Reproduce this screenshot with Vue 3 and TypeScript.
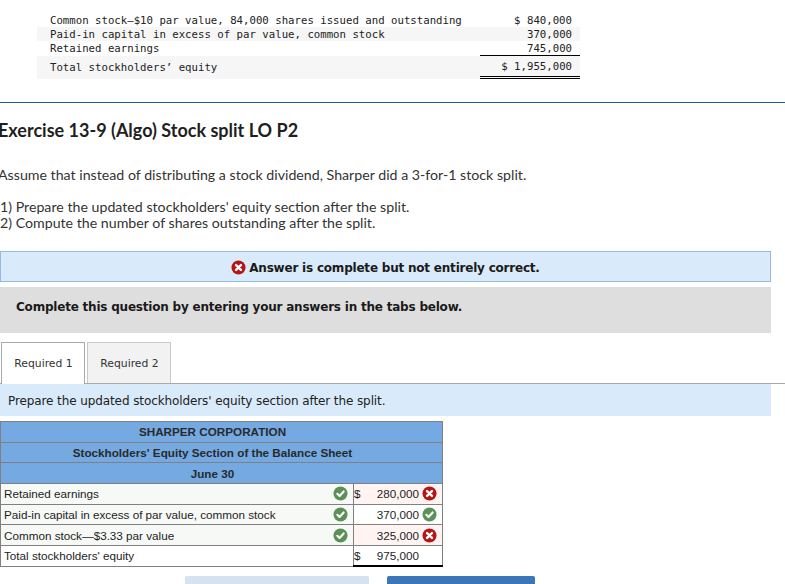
<script setup lang="ts">
interface TopRow { label: string; value: string; kind?: string }
const topRows: TopRow[] = [
  { label: 'Common stock—$10 par value, 84,000 shares issued and outstanding', value: '$ 840,000' },
  { label: 'Paid-in capital in excess of par value, common stock', value: '370,000', kind: 'alt' },
  { label: 'Retained earnings', value: '745,000', kind: 'under' },
  { label: 'Total stockholders’ equity', value: '$ 1,955,000', kind: 'total' },
]
interface Row { label: string; cur: string; value: string; valueOk: boolean; wrong: boolean }
const rows: Row[] = [
  { label: 'Retained earnings', cur: '$', value: '280,000', valueOk: false, wrong: true },
  { label: 'Paid-in capital in excess of par value, common stock', cur: '', value: '370,000', valueOk: true, wrong: false },
  { label: 'Common stock—$3.33 par value', cur: '', value: '325,000', valueOk: false, wrong: true },
]
</script>

<template>
  <div class="page">
    <div class="top">
      <div v-for="r in topRows" :key="r.label" class="top-row" :class="r.kind">
        <span class="top-label">{{ r.label }}</span>
        <span class="top-value">{{ r.value }}</span>
      </div>
    </div>
    <div class="rule"></div>
    <h2 class="title">Exercise 13-9 (Algo) Stock split LO P2</h2>
    <p class="intro">Assume that instead of distributing a stock dividend, Sharper did a 3-for-1 stock split.</p>
    <p class="steps">1) Prepare the updated stockholders' equity section after the split.<br />2) Compute the number of shares outstanding after the split.</p>

    <div class="alert">
      <svg class="ic" viewBox="0 0 16 16"><circle cx="8" cy="8" r="7.5" fill="#b81414" /><path d="M5.4 5.4l5.2 5.2M10.6 5.4l-5.2 5.2" stroke="#fff" stroke-width="2.6" stroke-linecap="round" /></svg>
      <span>Answer is complete but not entirely correct.</span>
    </div>
    <div class="complete">Complete this question by entering your answers in the tabs below.</div>

    <div class="tabs">
      <div class="tab active">Required 1</div>
      <div class="tab">Required 2</div>
    </div>
    <div class="prompt">Prepare the updated stockholders' equity section after the split.</div>

    <table class="sheet">
      <colgroup><col class="c1" /><col class="c2" /></colgroup>
      <thead>
        <tr><th colspan="2">SHARPER CORPORATION</th></tr>
        <tr><th colspan="2">Stockholders' Equity Section of the Balance Sheet</th></tr>
        <tr><th colspan="2">June 30</th></tr>
      </thead>
      <tbody>
        <tr v-for="r in rows" :key="r.label">
          <td class="lab">
            <div class="lab-in">
              <span>{{ r.label }}</span>
              <svg class="ic" viewBox="0 0 16 16"><circle cx="8" cy="8" r="7.5" fill="#5b9157" /><path d="M4.6 8.3l2.4 2.3 4.4-4.8" fill="none" stroke="#fff" stroke-width="2.2" stroke-linecap="round" stroke-linejoin="round" /></svg>
            </div>
          </td>
          <td class="val" :class="{ wrong: r.wrong }">
            <div class="val-in">
              <span class="cur">{{ r.cur }}</span>
              <span class="num">{{ r.value }}</span>
              <svg v-if="r.valueOk" class="ic" viewBox="0 0 16 16"><circle cx="8" cy="8" r="7.5" fill="#5b9157" /><path d="M4.6 8.3l2.4 2.3 4.4-4.8" fill="none" stroke="#fff" stroke-width="2.2" stroke-linecap="round" stroke-linejoin="round" /></svg>
              <svg v-else class="ic" viewBox="0 0 16 16"><circle cx="8" cy="8" r="7.5" fill="#b81414" /><path d="M5.4 5.4l5.2 5.2M10.6 5.4l-5.2 5.2" stroke="#fff" stroke-width="2.6" stroke-linecap="round" /></svg>
            </div>
          </td>
        </tr>
        <tr class="total">
          <td class="lab">Total stockholders' equity</td>
          <td class="val">
            <div class="val-in">
              <span class="cur">$</span>
              <span class="num">975,000</span>
              <span class="ic"></span>
            </div>
          </td>
        </tr>
      </tbody>
    </table>

    <div class="buttons">
      <div class="btn prev"></div>
      <div class="btn next"></div>
    </div>
  </div>
</template>

<style>
html, body { margin: 0; background: #fff; overflow: hidden; }
</style>

<style scoped>
.page { width: 785px; height: 584px; overflow: hidden; color: #222; font-family: "Lato", "Liberation Sans", sans-serif; }
.top { margin: 13px 0 0 37px; width: 543px; font-family: "DejaVu Sans Mono", monospace; font-size: 10.7px; color: #222; }
.top-row { display: flex; justify-content: space-between; height: 14px; line-height: 16px; }
.top-row.alt { background: #f6f6f6; }
.top-label { padding-left: 13px; }
.top-value { width: 100px; box-sizing: border-box; padding-right: 8px; text-align: right; }
.top-row.under { height: 15px; }
.top-row.under .top-value { border-bottom: 1px solid #000; height: 15px; }
.top-row.total { height: 23px; background: #f6f6f6; line-height: 24px; }
.top-row.total .top-value { border-bottom: 3px double #000; line-height: 22px; }
.rule { height: 1px; margin-top: 23px; background: #1f5f96; }
.title { margin: 17px 0 0 -2px; font-size: 18px; line-height: 20px; font-weight: 700; color: #1f1f1f; }
.intro { margin: 26px 0 0 -2px; font-size: 14.2px; line-height: 18px; color: #333; }
.steps { margin: 15px 0 0 0; font-size: 14.2px; line-height: 16px; color: #333; }
.alert { margin: 20px 0 0; width: 771px; height: 31px; box-sizing: border-box; border: 1px solid #93bbe6; padding-top: 2px; background: #d9eafa; display: flex; align-items: center; justify-content: center; gap: 3px; font-family: "DejaVu Sans", sans-serif; font-size: 12px; letter-spacing: -0.21px; font-weight: 700; color: #1a1a1a; }
.alert .ic { margin-top: -1px; }
.ic { width: 15px; height: 15px; flex: none; display: block; }
.complete { margin-top: 5px; width: 771px; height: 46px; box-sizing: border-box; padding: 11px 16px 0; background: #dedede; font-family: "DejaVu Sans", sans-serif; font-size: 12px; letter-spacing: -0.21px; font-weight: 700; line-height: 18px; color: #1a1a1a; }
.tabs { margin-top: 9px; display: flex; gap: 2px; padding-left: 1px; height: 41px; border-bottom: 1px solid #a9a9a9; }
.tab { width: 84px; box-sizing: border-box; height: 41px; padding-left: 1px; border: 1px solid #c9c9c9; border-bottom: 0; background: #f2f2f2; font-family: "DejaVu Sans", sans-serif; font-size: 10.8px; line-height: 41px; text-align: center; color: #333; }
.tab.active { height: 42px; background: #fff; border: 1px solid #aaa; border-bottom: 0; position: relative; z-index: 1; }
.prompt { width: 771px; height: 32px; box-sizing: border-box; padding-left: 8px; background: #d9eafa; font-family: "DejaVu Sans", sans-serif; font-size: 12px; letter-spacing: -0.1px; line-height: 34px; color: #222; }
.sheet { margin-top: 5px; width: 442px; border-collapse: collapse; table-layout: fixed; font-family: "Liberation Sans", sans-serif; font-size: 11.7px; color: #1e1e1e; }
.c1 { width: 353px; }
.c2 { width: 89px; }
.sheet th, .sheet td { border: 1px solid #808080; height: 20.7px; padding: 0; box-sizing: border-box; }
.sheet th { background: #74a9e2; font-weight: 700; text-align: center; padding-right: 18px; color: #2a2a2a; }
.sheet td.lab { padding-left: 3px; background: #f6f9f5; }
.lab-in { display: flex; justify-content: space-between; align-items: center; padding-right: 5px; white-space: nowrap; }
.val { background: #fff; }
.val.wrong { background: #fff4f2; }
.val-in { display: flex; align-items: center; padding: 0 5px 0 0; }
.cur { width: 24px; }
.num { flex: 1; text-align: right; padding-right: 3px; }
.sheet .total td.lab { background: #fff; }
.sheet .total td.val { border-top: 1px solid #000; border-bottom: 2px solid #000; }
.buttons { margin: 9px 0 0 185px; display: flex; gap: 18px; }
.btn { height: 30px; border-radius: 2px; }
.prev { width: 184px; background: #d6e2f0; }
.next { width: 148px; background: #3a76b8; }
</style>
